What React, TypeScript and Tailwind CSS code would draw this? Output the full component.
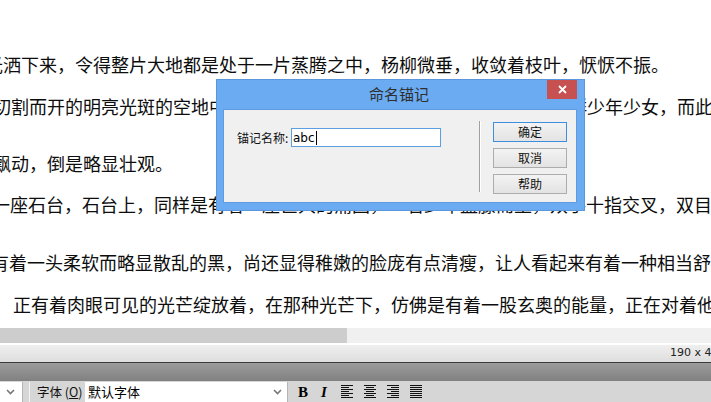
import React from "react";

const cjk = "font-['Noto_Sans_CJK_SC','Noto_Sans',sans-serif]";

function AlignIcon({ kind }: { kind: "left" | "center" | "right" | "justify" }) {
  const rows = [0, 1, 2, 3, 4, 5, 6];
  return (
    <svg width="12" height="14" viewBox="0 0 12 14" className="block">
      {rows.map((i) => {
        const long = i % 2 === 0;
        let x1 = 0;
        let x2 = 12;
        if (!long && kind !== "justify") {
          if (kind === "left") { x1 = 0; x2 = 8; }
          if (kind === "center") { x1 = 2; x2 = 10; }
          if (kind === "right") { x1 = 4; x2 = 12; }
        }
        return <line key={i} x1={x1} x2={x2} y1={i * 2 + 0.5} y2={i * 2 + 0.5} stroke="#111" strokeWidth="1" />;
      })}
    </svg>
  );
}

function Chevron() {
  return (
    <svg width="9" height="6" viewBox="0 0 9 6" className="block">
      <path d="M1 1 L4.5 4.5 L8 1" fill="none" stroke="#777" strokeWidth="1.6" />
    </svg>
  );
}

function DlgButton({ label, primary }: { label: string; primary?: boolean }) {
  return (
    <div
      className={`w-[74px] h-[20px] flex items-center justify-center text-[12px] text-[#111] bg-gradient-to-b from-[#f3f3f3] to-[#e3e3e3] border ${
        primary ? "border-[#3d8ee0]" : "border-[#adadad]"
      }`}
    >
      {label}
    </div>
  );
}

export default function App() {
  return (
    <div className={`w-[711px] h-[402px] overflow-hidden flex flex-col bg-white relative ${cjk}`}>
      {/* document text area */}
      <div className="h-[328px] shrink-0 overflow-hidden bg-white text-[18px] leading-[18px] text-[#0d0d0d] whitespace-nowrap flex flex-col pt-[55px]">
        <div className="ml-[-15px]">光洒下来，令得整片大地都是处于一片蒸腾之中，杨柳微垂，收敛着枝叶，恹恹不振。</div>
        <div className="ml-[-7px] mt-[24px]">切割而开的明亮光斑的空地中央，一名少年正盘膝而坐，在其周围还有一群少年少女，而此时他们</div>
        <div className="ml-[-7px] mt-[39px]">飘动，倒是略显壮观。</div>
        <div className="ml-[-8px] mt-[23px]">一座石台，石台上，同样是有着一座巨大的蒲团，一名少年盘膝而坐，双手十指交叉，双目紧闭</div>
        <div className="ml-[-9px] mt-[40px]">有着一头柔软而略显散乱的黑，尚还显得稚嫩的脸庞有点清瘦，让人看起来有着一种相当舒适的感觉</div>
        <div className="ml-[13px] mt-[24px]">正有着肉眼可见的光芒绽放着，在那种光芒下，仿佛是有着一股玄奥的能量，正在对着他的身体</div>
      </div>

      {/* horizontal scrollbar */}
      <div className="h-[15px] shrink-0 flex">
        <div className="w-[347px] bg-[#cdcdcd]" />
        <div className="flex-1 bg-[#f0f0f0]" />
      </div>
      <div className="h-[2px] shrink-0 bg-white" />

      {/* status bar */}
      <div className="h-[17px] shrink-0 bg-gradient-to-b from-[#efefef] to-[#dedede] flex items-center pl-[670px]">
        <span className="font-['DejaVu_Sans',sans-serif] text-[11px] text-[#222] whitespace-nowrap">190 x 400</span>
      </div>
      <div className="h-[1px] shrink-0 bg-[#3a3a3a]" />
      <div className="h-[18px] shrink-0 bg-gradient-to-b from-[#9c9c9c] to-[#818181]" />

      {/* property toolbar */}
      <div className="h-[21px] shrink-0 bg-[#d6d6d6] flex items-stretch pt-[1px]">
        <div className="w-[23px] bg-white flex items-center pl-[6px] border-r border-[#b5b5b5]">
          <Chevron />
        </div>
        <div className="w-[6px]" />
        <div className="w-[1px] bg-[#f4f4f4]" />
        <div className="w-[55px] flex items-center pl-[7px] text-[12.5px] text-[#111] whitespace-nowrap">
          字体 (<span className="underline">O</span>)
        </div>
        <div className="w-[203px] bg-white flex items-center justify-between pl-[3px] pr-[5px] border-r border-[#b5b5b5] text-[13px] text-[#000]">
          <span>默认字体</span>
          <Chevron />
        </div>
        <div className="flex items-center gap-[13px] pl-[10px]">
          <span className="font-['Liberation_Serif',serif] font-bold text-[15px] leading-none text-black">B</span>
          <span className="font-['Liberation_Serif',serif] font-bold italic text-[15px] leading-none text-black">I</span>
          <div className="flex items-center gap-[11px] ml-[1px]">
            <AlignIcon kind="left" />
            <AlignIcon kind="center" />
            <AlignIcon kind="right" />
            <AlignIcon kind="justify" />
          </div>
        </div>
      </div>

      {/* dialog */}
      <div className="absolute left-[216px] top-[79px] w-[369px] h-[132px] bg-[#6aabf1] border border-[#5a96dc] flex flex-col pl-[6px] pr-[7px] pb-[7px]">
        <div className="h-[29px] shrink-0 relative flex items-center justify-center">
          <span className="text-[15px] text-[#2e2e2e] ml-[-2px]">命名锚记</span>
          <div className="absolute right-0 top-0 w-[30px] h-[19px] bg-[#c75050] flex items-center justify-center">
            <svg width="9" height="9" viewBox="0 0 9 9">
              <path d="M1 1 L8 8 M8 1 L1 8" stroke="#fff" strokeWidth="1.8" />
            </svg>
          </div>
        </div>
        <div className="flex-1 bg-[#f0f0f0] border border-[#5e9be0] flex items-start">
          <div className="flex items-center mt-[18px] ml-[13px]">
            <span className="w-[54px] text-[12px] text-[#111] leading-[19px]">锚记名称:</span>
            <div className="w-[150px] h-[19px] bg-white border border-[#5b9fe3] flex items-center pl-[1px]">
              <span className="font-['DejaVu_Sans',sans-serif] text-[12px] text-black leading-none">abc</span>
              <span className="w-[1px] h-[14px] bg-black ml-[1px]" />
            </div>
          </div>
          <div className="ml-[38px] mt-[11px] w-[1px] h-[71px] bg-[#a0a0a0] border-r border-white box-content" />
          <div className="ml-[12px] mt-[12px] flex flex-col gap-[6px]">
            <DlgButton label="确定" primary />
            <DlgButton label="取消" />
            <DlgButton label="帮助" />
          </div>
        </div>
      </div>
    </div>
  );
}
